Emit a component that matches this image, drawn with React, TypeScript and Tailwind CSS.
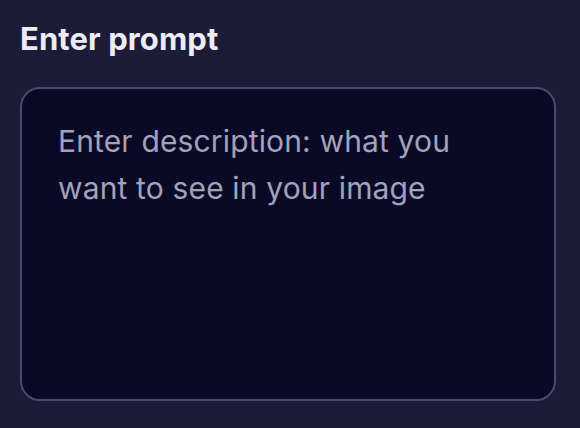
export default function App() {
  return (
    <div className="h-[428px] w-[580px] bg-[#1c1b38] px-5 pt-[20px] font-['Inter',sans-serif]">
      <h2 className="text-[31px] font-bold leading-[38px] tracking-[0.1px] text-[#ececf3]">
        Enter prompt
      </h2>
      <textarea
        className="mt-[29px] block h-[314px] w-[536px] resize-none rounded-[20px] border-2 border-[#4b4a6c] bg-[#0a0a27] px-[36px] py-[29px] text-[30px] leading-[47px] tracking-[0.15px] text-[#a9a9c4] placeholder:text-[#a2a2bb] outline-none"
        placeholder={"Enter description: what you\nwant to see in your image"}
      />
    </div>
  );
}
